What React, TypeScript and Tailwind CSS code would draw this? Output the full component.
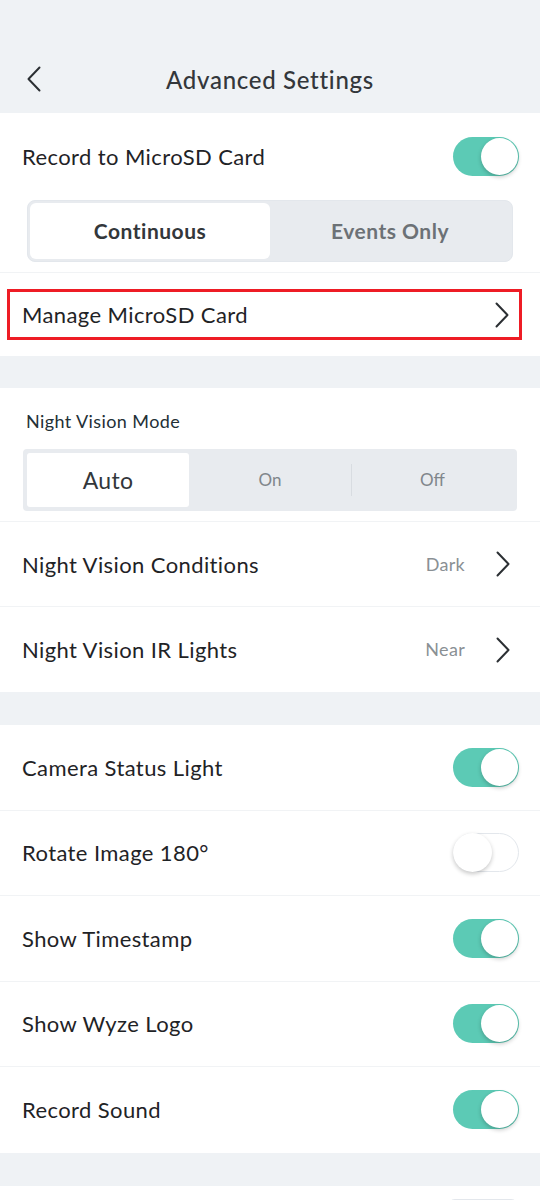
import { useState } from "react";

const font = { fontFamily: "Lato, 'Noto Sans', sans-serif" };

function Chevron({ className = "" }: { className?: string }) {
  return (
    <svg width="16" height="26" viewBox="0 0 16 26" className={className} fill="none">
      <path d="M2.5 1.5 L13.5 13 L2.5 24.5" stroke="#2b2f33" strokeWidth="2" strokeLinecap="round" strokeLinejoin="round" />
    </svg>
  );
}

function Toggle({ on }: { on: boolean }) {
  return (
    <div
      className={
        "relative h-[39px] w-[66px] rounded-full " +
        (on ? "bg-[#5ccab5]" : "border border-[#e3e7ec] bg-white")
      }
    >
      <div
        className={
          "absolute rounded-full bg-white shadow-[0_2px_4px_rgba(0,0,0,0.22)] " +
          (on ? "right-[1px] top-[1px] h-[37px] w-[37px]" : "-left-px -top-px h-[39px] w-[39px]")
        }
      />
    </div>
  );
}

function ToggleRow({ label, on, last }: { label: string; on: boolean; last?: boolean }) {
  return (
    <div className={"flex h-[85.5px] items-center justify-between pl-[22px] pr-[21px] " + (last ? "" : "border-b border-[#f1f3f5]")}>
      <span className="text-[22px] tracking-[0.4px] text-[#1f2326]">{label}</span>
      <Toggle on={on} />
    </div>
  );
}

function LinkRow({ label, value, last }: { label: string; value: string; last?: boolean }) {
  return (
    <div className={"flex h-[85px] items-center pl-[22px] pr-[29px] " + (last ? "" : "border-b border-[#f1f3f5]")}>
      <span className="flex-1 text-[22px] tracking-[0.4px] text-[#1f2326]">{label}</span>
      <span className="mr-[30px] text-[18px] tracking-[0.3px] text-[#8a9094]">{value}</span>
      <Chevron />
    </div>
  );
}

export default function App() {
  const [rec, setRec] = useState("Continuous");
  const [nv, setNv] = useState("Auto");

  return (
    <div className="min-h-[1200px] w-[540px] overflow-hidden bg-[#eff2f5]" style={font}>
      {/* header */}
      <div className="relative flex h-[113px] items-end justify-center pb-[15px]">
        <div className="absolute left-[26px] top-[66px]">
          <svg width="16" height="26" viewBox="0 0 16 26" fill="none">
            <path d="M13.5 1.5 L2.5 13 L13.5 24.5" stroke="#2b2f33" strokeWidth="2" strokeLinecap="round" strokeLinejoin="round" />
          </svg>
        </div>
        <h1 className="text-[24px] font-medium tracking-[0.7px] text-[#33373b]">Advanced Settings</h1>
      </div>

      {/* microsd section */}
      <div className="bg-white">
        <div className="flex h-[87px] items-center justify-between pl-[22px] pr-[21px]">
          <span className="text-[22px] tracking-[0.4px] text-[#1f2326]">Record to MicroSD Card</span>
          <Toggle on={true} />
        </div>
        <div className="px-[27px] pb-[10px]">
          <div className="flex h-[62px] rounded-[8px] border border-[#e3e7ec] bg-[#e8ebef] p-[2px]">
            {["Continuous", "Events Only"].map((o) => (
              <button
                key={o}
                onClick={() => setRec(o)}
                className={
                  "flex-1 rounded-[6px] text-[21px] font-bold tracking-[0.5px] " +
                  (rec === o ? "bg-white text-[#33373b]" : "text-[#6c7176]")
                }
              >
                {o}
              </button>
            ))}
          </div>
        </div>
        <div className="border-t border-[#f1f3f5] pb-[16px] pl-[7px] pr-[18px] pt-[16px]">
          <div className="flex h-[51px] items-center border-[3px] border-[#ee1c25] pl-[12px] pr-[9px]">
            <span className="flex-1 text-[22px] tracking-[0.4px] text-[#1f2326]">Manage MicroSD Card</span>
            <Chevron />
          </div>
        </div>
      </div>

      <div className="h-[32px]" />

      {/* night vision */}
      <div className="bg-white">
        <div className="border-b border-[#f1f3f5] px-[23px] pb-[10px] pt-[20px]">
          <div className="mb-[14px] pl-[3px] text-[18px] leading-[27px] tracking-[0.4px] text-[#233036]">Night Vision Mode</div>
          <div className="flex h-[62px] items-stretch rounded-[4px] bg-[#e8ebef] p-[4px]">
            {["Auto", "On", "Off"].map((o, i) => (
              <div key={o} className="flex flex-1 items-center">
                {i === 2 && nv !== "On" && nv !== "Off" && <div className="h-[32px] w-px bg-[#d8dce1]" />}
                <button
                  onClick={() => setNv(o)}
                  className={
                    "h-full flex-1 rounded-[3px] " +
                    (nv === o ? "bg-white text-[23px] tracking-[0.3px] text-[#33373b]" : "text-[17px] text-[#80868b]")
                  }
                >
                  {o}
                </button>
              </div>
            ))}
          </div>
        </div>
        <LinkRow label="Night Vision Conditions" value="Dark" />
        <LinkRow label="Night Vision IR Lights" value="Near" last />
      </div>

      <div className="h-[33px]" />

      <div className="bg-white">
        <ToggleRow label="Camera Status Light" on={true} />
        <ToggleRow label="Rotate Image 180°" on={false} />
        <ToggleRow label="Show Timestamp" on={true} />
        <ToggleRow label="Show Wyze Logo" on={true} />
        <ToggleRow label="Record Sound" on={true} last />
      </div>

      <div className="h-[33px]" />

      <div className="bg-white">
        <div className="flex h-[85px] items-start justify-end pr-[21px] pt-[13px]">
          <div className="h-[39px] w-[72px] rounded-[8px] border border-[#e3e7ec] bg-[#f4f6f8]" />
        </div>
      </div>
    </div>
  );
}
